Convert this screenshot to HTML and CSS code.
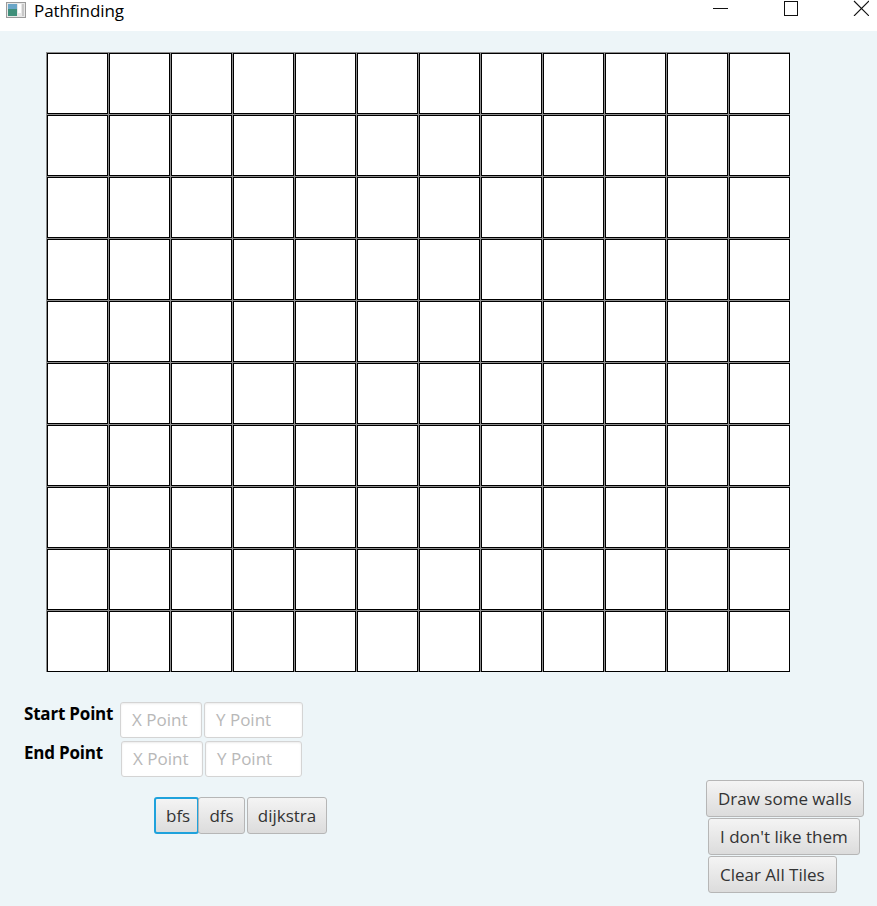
FILE: index.html
```html
<!DOCTYPE html>
<html>
<head>
<meta charset="utf-8">
<title>Pathfinding</title>
<link rel="stylesheet" href="styles.css">
</head>
<body>
<div class="window">
  <div class="titlebar">
    <div class="title-left">
      <svg class="app-icon" width="20" height="16" viewBox="0 0 20 16">
        <rect x="0.5" y="0.5" width="19" height="15" fill="#e8e8e8" stroke="#9a9a9a"/>
        <rect x="2" y="2" width="9" height="12" fill="#3f8f7a"/>
        <rect x="2" y="2" width="9" height="5" fill="#6aa6c8"/>
        <rect x="12" y="2" width="3" height="9" fill="#ffffff"/>
        <rect x="16" y="2" width="2" height="12" fill="#c8c8c8"/>
      </svg>
      <span class="title-text">Pathfinding</span>
    </div>
    <div class="controls">
      <svg class="ctl" width="16" height="16" viewBox="0 0 16 16"><line x1="0" y1="8.5" x2="15" y2="8.5" stroke="#111" stroke-width="1"/></svg>
      <svg class="ctl" width="16" height="16" viewBox="0 0 16 16"><rect x="1.5" y="1.5" width="13" height="14" fill="none" stroke="#111" stroke-width="1"/></svg>
      <svg class="ctl" width="16" height="16" viewBox="0 0 16 16"><path d="M1 1 L16 16 M16 1 L1 16" stroke="#111" stroke-width="1.1"/></svg>
    </div>
  </div>
  <div class="content">
    <div class="grid" id="grid"></div>
    <div class="bottom">
      <div class="left">
        <div class="row">
          <span class="label">Start Point</span>
          <div class="fields">
            <div class="field">X Point</div>
            <div class="field wide">Y Point</div>
          </div>
        </div>
        <div class="row row2">
          <span class="label">End Point</span>
          <div class="fields shift">
            <div class="field">X Point</div>
            <div class="field wide2">Y Point</div>
          </div>
        </div>
        <div class="algos">
          <button class="btn focused">bfs</button><button class="btn dfs">dfs</button><button class="btn gap">dijkstra</button>
        </div>
      </div>
      <div class="right">
        <button class="btn tall">Draw some walls</button>
        <button class="btn tall shift2">I don't like them</button>
        <button class="btn tall shift2">Clear All Tiles</button>
      </div>
    </div>
  </div>
</div>
<script>
  var g = document.getElementById('grid');
  for (var i = 0; i < 120; i++) { var c = document.createElement('div'); c.className = 'cell'; g.appendChild(c); }
</script>
</body>
</html>
```

FILE: styles.css
```css
html, body {
  margin: 0;
  padding: 0;
  background: #edf5f8;
}
body {
  font-family: "Open Sans", "Noto Sans", "DejaVu Sans", sans-serif;
  width: 877px;
  height: 906px;
  overflow: hidden;
}
.window {
  width: 877px;
  height: 906px;
  display: flex;
  flex-direction: column;
}
.titlebar {
  height: 31px;
  background: #ffffff;
  display: flex;
  justify-content: space-between;
  align-items: flex-start;
  flex-shrink: 0;
}
.title-left {
  display: flex;
  align-items: center;
  padding-left: 6px;
  height: 20px;
}
.app-icon {
  margin-right: 8px;
}
.title-text {
  font-family: "Open Sans", sans-serif;
  font-size: 17px;
  color: #000;
  letter-spacing: -0.1px;
}
.controls {
  display: flex;
  gap: 54px;
  padding-right: 8px;
}
.ctl {
  display: block;
}
.content {
  flex: 1;
  background: #edf5f8;
  padding-top: 21px;
}
.grid {
  margin-left: 46px;
  width: 744px;
  display: grid;
  grid-template-columns: repeat(12, 61px);
  grid-auto-rows: 61px;
  gap: 1px;
  padding: 1px 0 0 1px;
  box-sizing: border-box;
  background: #8c8c8c;
}
.cell {
  background: #ffffff;
  border: 1px solid #000;
  box-sizing: border-box;
}
.bottom {
  display: flex;
  justify-content: space-between;
  margin-top: 30px;
}
.left {
  padding-left: 24px;
}
.row {
  display: flex;
  align-items: flex-start;
}
.row2 {
  margin-top: 3px;
}
.label {
  width: 96px;
  font-weight: bold;
  font-size: 17px;
  line-height: 24px;
  color: #000;
  letter-spacing: -0.2px;
  white-space: nowrap;
}
.fields {
  display: flex;
  gap: 2px;
}
.shift {
  margin-left: 1px;
}
.field {
  width: 82px;
  height: 36px;
  box-sizing: border-box;
  background: #ffffff;
  border: 1px solid #d4d4d4;
  border-radius: 3px;
  box-shadow: inset 0 1px 2px rgba(0,0,0,0.08);
  color: #b8b8b8;
  font-size: 17px;
  line-height: 34px;
  padding-left: 11px;
  white-space: nowrap;
}
.wide {
  width: 99px;
}
.wide2 {
  width: 97px;
}
.algos {
  margin-top: 20px;
  margin-left: 130px;
  display: flex;
}
.btn {
  font-family: "Open Sans", "Noto Sans", sans-serif;
  font-size: 17px;
  color: #333;
  height: 37px;
  padding: 0 11px;
  border: 1px solid #b6b6b6;
  border-radius: 3px;
  background: linear-gradient(#f4f4f4, #dcdcdc);
  box-sizing: border-box;
  margin: 0;
  white-space: nowrap;
  cursor: default;
}
.btn.focused {
  border: 2px solid #1fa2dc;
  padding: 0 10px;
  width: 45px;
}
.btn.dfs {
  width: 47px;
  margin-left: -1px;
  padding: 0;
}
.btn.gap {
  margin-left: 2px;
  width: 80px;
  padding: 0;
}
.right {
  display: flex;
  flex-direction: column;
  align-items: flex-start;
  margin-top: 78px;
  margin-right: 15px;
  width: 156px;
}
.tall {
  height: 37px;
  padding: 0 11px;
}
.shift2 {
  margin-left: 2px;
  margin-top: 1px;
}
```
